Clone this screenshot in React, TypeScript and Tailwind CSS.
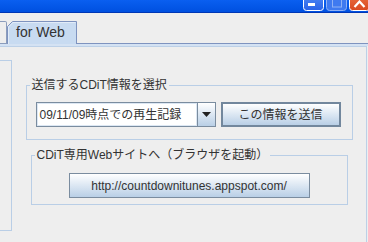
import type { ReactNode } from 'react'

const FONT = "font-['Liberation_Sans','Noto_Sans_CJK_JP',sans-serif]"

function WindowButtons() {
  return (
    <svg width="65" height="12" viewBox="0 0 65 12" aria-hidden="true">
      <defs>
        <linearGradient id="minG" x1="0" y1="0" x2="0" y2="1">
          <stop offset="0" stopColor="#5a94f7" />
          <stop offset="1" stopColor="#2a63e8" />
        </linearGradient>
        <linearGradient id="closeG" x1="0" y1="0" x2="0" y2="1">
          <stop offset="0" stopColor="#ef7a4c" />
          <stop offset="1" stopColor="#d9481f" />
        </linearGradient>
      </defs>
      {/* minimize */}
      <rect x="0.5" y="-10" width="20" height="20.5" rx="3" fill="url(#minG)" stroke="#ffffff" />
      <rect x="5" y="3" width="7" height="3" fill="#ffffff" />
      {/* maximize (disabled) */}
      <rect x="23.5" y="-10" width="20" height="20.5" rx="3" fill="#3f7af0" stroke="#8fb1f5" />
      <rect x="29.5" y="-4" width="9" height="11" fill="none" stroke="#8fb1f5" />
      {/* close */}
      <rect x="46.5" y="-10" width="20" height="20.5" rx="3" fill="url(#closeG)" stroke="#ffffff" />
      <path d="M51.5 7 L56.5 1.5 L61.5 7" fill="none" stroke="#ffffff" strokeWidth="2.2" />
    </svg>
  )
}

function Tab({ children }: { children: ReactNode }) {
  return (
    <div className="relative flex h-[23px] w-[70px] items-start">
      <svg className="absolute inset-0" width="70" height="23" viewBox="0 0 70 23" aria-hidden="true">
        <path d="M0.5 23 L0.5 5.5 L5.5 0.5 L69.5 0.5 L69.5 23" fill="#c8dbf1" stroke="#7e93bf" />
        <path d="M1.5 23 L1.5 6 L6 1.5 L68.5 1.5" fill="none" stroke="#e2ecf8" />
      </svg>
      <span className="relative pl-[9px] pt-[3px] text-[14px] leading-[16px] text-[#333333]">{children}</span>
    </div>
  )
}

function Group({ title, className, children }: { title: string; className: string; children: ReactNode }) {
  return (
    <fieldset className={`border border-[#b9cee6] ${className}`}>
      <legend className="ml-[3px] px-[2px] text-[12px] leading-[14px] text-[#333333]">{title}</legend>
      {children}
    </fieldset>
  )
}

const buttonFace = 'bg-gradient-to-b from-[#ffffff] to-[#b9cfe6]'

export default function App() {
  return (
    <div className={`h-[242px] w-[368px] overflow-hidden bg-[#eeeeee] ${FONT}`}>
      {/* title bar */}
      <div className="flex h-[13px] items-start justify-end border-b border-[#0036b5] bg-gradient-to-b from-[#0a5ff0] to-[#0050e0] pl-0">
        <div className="pr-0">
          <WindowButtons />
        </div>
      </div>

      {/* tab strip */}
      <div className="flex h-[31px] items-end">
        <div className="h-[23px] w-[7px] rounded-tr-[2px] border-r border-t border-b border-[#8c9dbc] bg-[#eeeeee]" />
        <Tab>for Web</Tab>
        <div className="h-px flex-1 bg-[#7e93bf]" />
      </div>
      <div className="h-[2px] bg-[#d4e2f3]" />

      {/* content pane */}
      <div className="flex h-[196px] w-[367px] border-r border-t border-[#bcd0e7]">
        <div className="mt-[13px] h-[171px] w-[12px] shrink-0 border-b border-r border-t border-[#b9cee6]" />

        <div className="flex flex-1 flex-col items-center pt-[31px]">
          <Group title="送信するCDiT情報を選択" className="h-[62px] w-[327px]">
            <div className="flex items-center pl-[9px] pt-[10px]">
              <div className="flex h-[25px] w-[180px] border border-[#7a8c9f]">
                <div className="flex flex-1 items-center border border-[#dce7f3] bg-[#ffffff] pl-[2px] text-[12px] text-[#333333]">
                  09/11/09時点での再生記録
                </div>
                <div className={`flex w-[18px] items-center justify-center border-l border-[#7a8c9f] ${buttonFace}`}>
                  <svg width="9" height="5" viewBox="0 0 9 5" aria-hidden="true">
                    <path d="M0 0 H9 L4.5 5 Z" fill="#222222" />
                  </svg>
                </div>
              </div>
              <button
                type="button"
                className={`ml-[5px] h-[25px] w-[120px] border-2 border-[#72879d] text-[12px] text-[#333333] ${buttonFace}`}
              >
                この情報を送信
              </button>
            </div>
          </Group>

          <Group title="CDiT専用Webサイトへ（ブラウザを起動）" className="mt-[8px] h-[57px] w-[317px]">
            <div className="flex justify-center pt-[11px]">
              <button
                type="button"
                className={`h-[25px] w-[241px] border border-[#7a8c9f] text-[12px] text-[#333333] ${buttonFace}`}
              >
                http://countdownitunes.appspot.com/
              </button>
            </div>
          </Group>
        </div>
      </div>
    </div>
  )
}
